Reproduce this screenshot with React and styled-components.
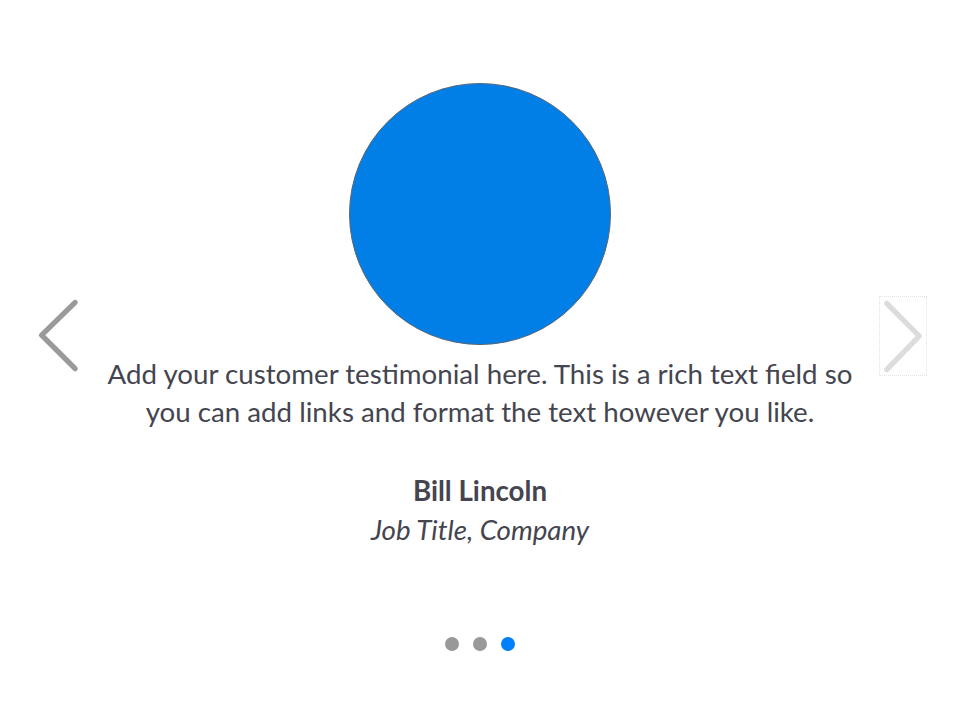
import React from 'react';
import styled, { createGlobalStyle } from 'styled-components';

const GlobalStyle = createGlobalStyle`
  html, body {
    margin: 0;
    padding: 0;
    background: #fff;
  }
  body {
    font-family: Lato, 'Open Sans', sans-serif;
    color: #44454f;
  }
`;

const Carousel = styled.div`
  position: relative;
  width: 960px;
  height: 720px;
  overflow: hidden;
`;

const Slide = styled.div`
  display: flex;
  flex-direction: column;
  align-items: center;
  padding-top: 83px;
`;

const Avatar = styled.div`
  width: 262px;
  height: 262px;
  border-radius: 50%;
  background: #027fe7;
  box-sizing: border-box;
  border: 1px solid #5a6470;
`;

const Quote = styled.p`
  margin: 10px 0 0;
  width: 770px;
  text-align: center;
  font-size: 27.7px;
  line-height: 38px;
`;

const Name = styled.div`
  margin-top: 41px;
  font-size: 27.7px;
  font-weight: 700;
  line-height: 38px;
`;

const Role = styled.div`
  margin-top: 1px;
  font-size: 27.7px;
  font-style: italic;
  line-height: 38px;
`;

const Dots = styled.div`
  display: flex;
  gap: 14px;
  margin-top: 88px;
`;

const Dot = styled.span`
  width: 14px;
  height: 14px;
  border-radius: 50%;
  background: ${(props) => (props.active ? '#0080fa' : '#999')};
`;

const Arrow = styled.button`
  position: absolute;
  top: 296px;
  ${(props) => (props.side === 'left' ? 'left: 32px;' : 'right: 33px;')}
  width: 48px;
  height: 80px;
  padding: 0;
  background: none;
  border: 1px dotted ${(props) => (props.focused ? '#e2e2e2' : 'transparent')};
  display: flex;
  align-items: center;
  justify-content: center;
  cursor: pointer;
`;

const Chevron = ({ dir, color }) => (
  <svg width="48" height="80" viewBox="0 0 48 80">
    <polyline
      points={dir === 'left' ? '44,5 9,39 44,74' : '7,6 41,40 7,75'}
      fill="none"
      stroke={color}
      strokeWidth="5.5"
      strokeLinecap="round"
      strokeLinejoin="round"
    />
  </svg>
);

export default function App() {
  return (
    <>
      <GlobalStyle />
      <Carousel>
        <Slide>
          <Avatar />
          <Quote>
            Add your customer testimonial here. This is a rich text field so you can add links
            and format the text however you like.
          </Quote>
          <Name>Bill Lincoln</Name>
          <Role>Job Title, Company</Role>
          <Dots>
            <Dot />
            <Dot />
            <Dot active />
          </Dots>
        </Slide>
        <Arrow side="left" aria-label="Previous">
          <Chevron dir="left" color="#9a9a9a" />
        </Arrow>
        <Arrow side="right" focused aria-label="Next">
          <Chevron dir="right" color="#dcdcdc" />
        </Arrow>
      </Carousel>
    </>
  );
}
